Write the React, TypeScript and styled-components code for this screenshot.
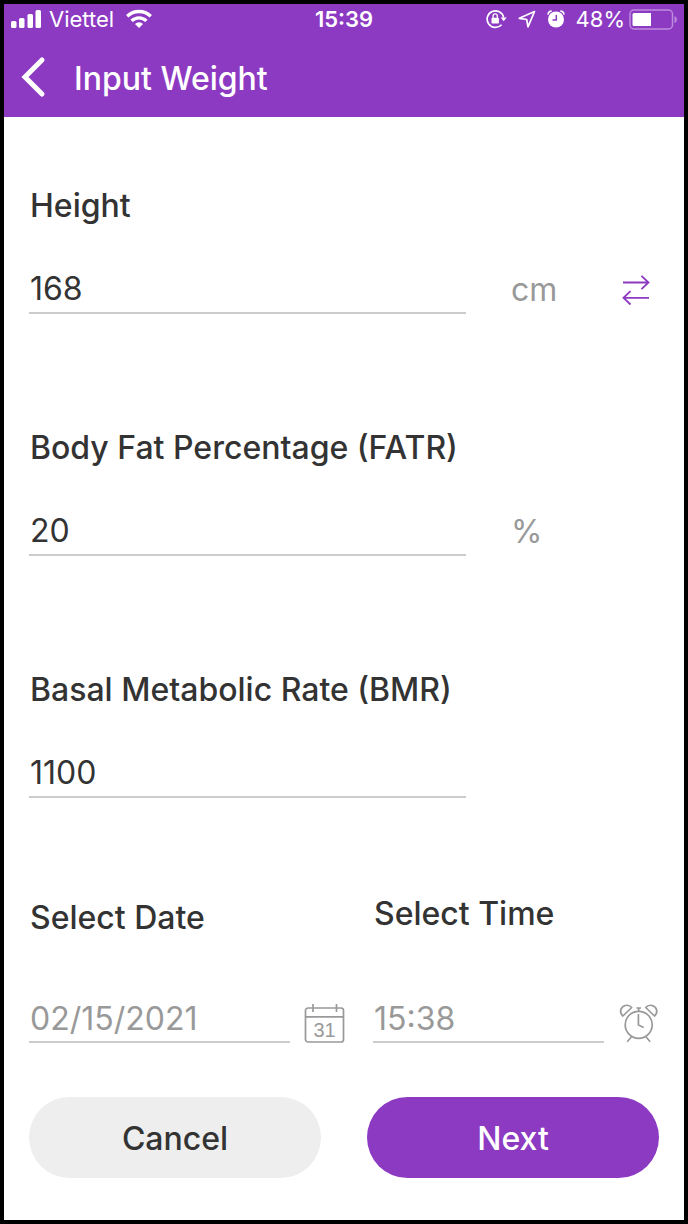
import React, { useState } from "react";
import styled, { createGlobalStyle } from "styled-components";

const purple = "#8d3ac3";
const ink = "#333333";
const muted = "#999999";
const rule = "#cccccc";

const GlobalStyle = createGlobalStyle`
  *, *::before, *::after { box-sizing: border-box; }
  body {
    margin: 0;
    background: #ffffff;
    font-family: Inter, "Liberation Sans", sans-serif;
    color: ${ink};
  }
  button, input { font: inherit; color: inherit; }
`;

const Screen = styled.div`
  min-height: 100vh;
  border: 4px solid #000000;
  background: #ffffff;
`;

const Header = styled.header`
  background: ${purple};
  color: #ffffff;
`;

const StatusBar = styled.div`
  display: grid;
  grid-template-columns: 1fr auto 1fr;
  align-items: center;
  height: 30px;
  padding: 0 7px;
  font-size: 22px;
  line-height: 28px;
`;

const StatusGroup = styled.div<{ $end?: boolean }>`
  display: flex;
  align-items: center;
  justify-content: ${(p) => (p.$end ? "flex-end" : "flex-start")};
  gap: ${(p) => (p.$end ? "11px" : "8px")};
`;

const BatteryGroup = styled.div`
  display: flex;
  align-items: center;
  gap: 4px;
`;

const Clock = styled.span`
  font-weight: 600;
`;

const TitleBar = styled.div`
  display: flex;
  align-items: center;
  gap: 24px;
  height: 83px;
  padding: 2px 14px 0;
`;

const BackButton = styled.button`
  display: grid;
  place-items: center;
  width: 32px;
  height: 48px;
  padding: 0;
  border: 0;
  background: none;
`;

const Title = styled.h1`
  margin: 0;
  padding-top: 4px;
  font-size: 32px;
  font-weight: 500;
  line-height: 40px;
`;

const Form = styled.form`
  padding: 69px 25px 41px;
`;

const Field = styled.div`
  margin-bottom: 114px;
`;

const Label = styled.label<{ $gap?: number }>`
  display: block;
  margin-bottom: ${(p) => p.$gap ?? 36}px;
  padding-left: 1px;
  font-size: 32px;
  font-weight: 500;
  line-height: 40px;
`;

const MeasureRow = styled.div`
  display: grid;
  grid-template-columns: minmax(0, 1fr) 57px 46px;
  column-gap: 45px;
  align-items: center;
`;

const TextInput = styled.input<{ $muted?: boolean }>`
  display: block;
  width: 100%;
  min-width: 0;
  height: 52px;
  padding: ${(p) => (p.$muted ? 4 : 2)}px 0 0 1px;
  border: 0;
  border-bottom: 2px solid ${rule};
  border-radius: 0;
  outline: none;
  background: transparent;
  font-size: 32px;
  line-height: 40px;
  color: ${(p) => (p.$muted ? muted : ink)};
`;

const Unit = styled.span`
  padding-top: 4px;
  font-size: 32px;
  line-height: 40px;
  color: ${muted};
`;

const IconButton = styled.button`
  display: grid;
  flex: none;
  place-items: center;
  padding: 0;
  border: 0;
  background: none;
`;

const SwapButton = styled(IconButton)`
  padding-top: 4px;
`;

const DateTimeRow = styled.div`
  display: grid;
  grid-template-columns: 316fr 286fr;
  column-gap: 28px;
  align-items: end;
  margin: -18px 0 54px;
`;

const PickerRow = styled.div`
  display: flex;
  align-items: flex-end;
  gap: 14px;
`;

const Actions = styled.div`
  display: grid;
  grid-template-columns: 1fr 1fr;
  column-gap: 46px;
`;

const ActionButton = styled.button<{ $primary?: boolean }>`
  height: 81px;
  padding: 2px 0 0;
  border: 0;
  border-radius: 41px;
  background: ${(p) => (p.$primary ? purple : "#eeeeee")};
  color: ${(p) => (p.$primary ? "#ffffff" : ink)};
  font-size: 32px;
  font-weight: 500;
  line-height: 40px;
`;

const SignalIcon = () => (
  <svg width="30" height="18" viewBox="0 0 30 18" fill="#fff" aria-hidden="true">
    <rect x="0" y="11" width="5.500" height="7" rx="1.500" />
    <rect x="8" y="8" width="5.500" height="10" rx="1.500" />
    <rect x="16.500" y="4" width="5.500" height="14" rx="1.500" />
    <rect x="24.500" y="0" width="5.500" height="18" rx="1.500" />
  </svg>
);

const WifiIcon = () => (
  <svg width="34" height="20" viewBox="-4 0 34 20" aria-hidden="true">
    <g fill="none" stroke="#fff" strokeWidth="3.400">
      <path d="M1.200 7.300a16.800 16.800 0 0 1 23.600 0" />
      <path d="M5.600 11.900a10.500 10.500 0 0 1 14.800 0" />
    </g>
    <path d="M13 19l-4-4a5.700 5.700 0 0 1 8 0z" fill="#fff" />
  </svg>
);

const RotationLockIcon = () => (
  <svg width="21" height="20" viewBox="0 0 21 20" fill="none" stroke="#fff" aria-hidden="true">
    <path d="M17.600 8.500A8.300 8.300 0 1 0 15.600 15.700" strokeWidth="1.700" />
    <path d="M14.700 8.600h6l-3 3.600z" fill="#fff" stroke="none" />
    <rect x="5.500" y="8.800" width="7.400" height="5.600" rx="0.700" fill="#fff" stroke="none" />
    <path d="M7.100 9V7a2.100 2.100 0 0 1 4.200 0v2" strokeWidth="1.300" />
  </svg>
);

const LocationIcon = () => (
  <svg width="18" height="18" viewBox="0 0 18 18" aria-hidden="true">
    <path
      d="M16.500 1.500L1.300 8.300l7.400 1.200 1.300 7.300z"
      fill="none"
      stroke="#fff"
      strokeWidth="1.700"
      strokeLinejoin="round"
    />
  </svg>
);

const AlarmIcon = () => (
  <svg width="18" height="18" viewBox="0 0 18 18" aria-hidden="true">
    <circle cx="9" cy="9.500" r="8" fill="#fff" />
    <path d="M1 4.600Q1.200 1.300 4.700 1.100M17 4.600Q16.800 1.300 13.300 1.100" fill="none" stroke="#fff" strokeWidth="1.600" />
    <path d="M9.300 5v5H5.500" fill="none" stroke={purple} strokeWidth="1.500" />
  </svg>
);

const BatteryIcon = () => (
  <svg width="48" height="21" viewBox="0 0 48 21" aria-hidden="true">
    <rect x="1" y="1" width="42.500" height="19" rx="4" fill="none" stroke="#bd8ade" strokeWidth="1.500" />
    <path d="M45.500 7q2.500 1 2.500 3.500T45.500 14z" fill="#bd8ade" />
    <path d="M5 4h17v13H5a1.500 1.500 0 0 1-1.500-1.500v-10A1.500 1.500 0 0 1 5 4z" fill="#fff" />
  </svg>
);

const BackIcon = () => (
  <svg width="26" height="42" viewBox="0 0 26 42" aria-hidden="true">
    <path d="M21 4L4 21l17 17" fill="none" stroke="#fff" strokeWidth="5" strokeLinecap="round" strokeLinejoin="miter" />
  </svg>
);

const SwapIcon = () => (
  <svg width="28" height="32" viewBox="0 0 28 32" fill="none" stroke={purple} strokeWidth="1.800" aria-hidden="true">
    <path d="M1 8.500h25.500M19.500 1.800l7 6.700-7 6.700" />
    <path d="M27 23.800H1.500M8.500 17.200l-7 6.600 7 6.700" />
  </svg>
);

const CalendarIcon = () => (
  <svg width="41" height="41" viewBox="0 0 41 41" aria-hidden="true">
    <g fill="none" stroke={muted} strokeWidth="1.700">
      <rect x="1.500" y="6" width="38" height="34" rx="2.500" />
      <path d="M1.500 14.800h38M9 2v8M32.500 2v8" />
    </g>
    <text x="20.500" y="35" textAnchor="middle" fontFamily="Liberation Sans, sans-serif" fontSize="20" fill={muted}>
      31
    </text>
  </svg>
);

const AlarmClockIcon = () => (
  <svg width="41" height="41" viewBox="0 0 41 41" fill="none" stroke={muted} strokeWidth="1.700" strokeLinejoin="round" aria-hidden="true">
    <circle cx="20.700" cy="22.800" r="13.500" />
    <path d="M20.700 9.300V6M18.400 6H23" />
    <path d="M20.400 12v11l5.300 2.500" />
    <path d="M13.500 34.800l-4.300 5M27.900 34.800l4.300 5" />
    <path d="M4.900 14C1 10.500 2.300 5 7.200 3.500q4-1 6.500 2z" />
    <path d="M36.500 14c3.900-3.500 2.600-9-2.300-10.500q-4-1-6.500 2z" />
  </svg>
);

interface MeasureFieldProps {
  id: string;
  label: string;
  initial: string;
  unit?: string;
  swappable?: boolean;
}

const MeasureField = ({ id, label, initial, unit, swappable }: MeasureFieldProps) => {
  const [value, setValue] = useState(initial);
  return (
    <Field>
      <Label htmlFor={id}>{label}</Label>
      <MeasureRow>
        <TextInput id={id} inputMode="decimal" value={value} onChange={(e) => setValue(e.target.value)} />
        {unit && <Unit>{unit}</Unit>}
        {swappable && (
          <SwapButton type="button" aria-label="Switch unit">
            <SwapIcon />
          </SwapButton>
        )}
      </MeasureRow>
    </Field>
  );
};

export default function App() {
  const [date, setDate] = useState("02/15/2021");
  const [time, setTime] = useState("15:38");

  return (
    <>
      <GlobalStyle />
      <Screen>
        <Header>
          <StatusBar>
            <StatusGroup>
              <SignalIcon />
              <span>Viettel</span>
              <WifiIcon />
            </StatusGroup>
            <Clock>15:39</Clock>
            <StatusGroup $end>
              <RotationLockIcon />
              <LocationIcon />
              <AlarmIcon />
              <BatteryGroup>
                <span>48%</span>
                <BatteryIcon />
              </BatteryGroup>
            </StatusGroup>
          </StatusBar>
          <TitleBar>
            <BackButton type="button" aria-label="Back">
              <BackIcon />
            </BackButton>
            <Title>Input Weight</Title>
          </TitleBar>
        </Header>

        <Form onSubmit={(e) => e.preventDefault()}>
          <MeasureField id="height" label="Height" initial="168" unit="cm" swappable />
          <MeasureField id="fatr" label="Body Fat Percentage (FATR)" initial="20" unit="%" />
          <MeasureField id="bmr" label="Basal Metabolic Rate (BMR)" initial="1100" />

          <DateTimeRow>
            <div>
              <Label htmlFor="date" $gap={53}>Select Date</Label>
              <PickerRow>
                <TextInput id="date" $muted value={date} onChange={(e) => setDate(e.target.value)} />
                <IconButton type="button" aria-label="Open calendar">
                  <CalendarIcon />
                </IconButton>
              </PickerRow>
            </div>
            <div>
              <Label htmlFor="time" $gap={57}>Select Time</Label>
              <PickerRow>
                <TextInput id="time" $muted value={time} onChange={(e) => setTime(e.target.value)} />
                <IconButton type="button" aria-label="Open clock">
                  <AlarmClockIcon />
                </IconButton>
              </PickerRow>
            </div>
          </DateTimeRow>

          <Actions>
            <ActionButton type="button">Cancel</ActionButton>
            <ActionButton type="submit" $primary>Next</ActionButton>
          </Actions>
        </Form>
      </Screen>
    </>
  );
}
